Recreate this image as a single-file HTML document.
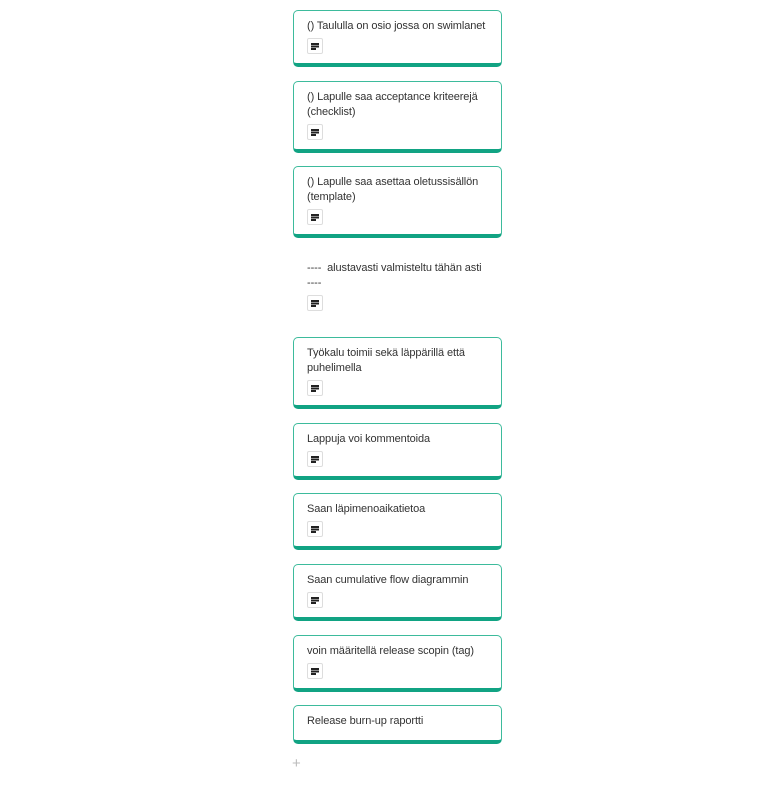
<!DOCTYPE html>
<html><head><meta charset="utf-8"><style>
body{margin:0;background:#fff;font-family:"Liberation Sans",sans-serif;}
.c{position:absolute;left:293px;width:209px;box-sizing:border-box;border:1.5px solid #3dbb9c;border-bottom:4px solid #11a383;border-radius:5px;background:#fff;padding:8px 4px 0 13px;font-size:11px;line-height:15px;color:#333;white-space:nowrap;letter-spacing:-0.1px;}
.n{border-color:transparent;}
.i{position:absolute;left:13px;width:16px;height:16px;border:1px solid #ddd;border-radius:2px;box-sizing:border-box;}
.i:before{content:"";position:absolute;left:3px;top:4px;width:8px;height:1.5px;background:#222;box-shadow:0 2.5px 0 #222,0 5px 0 #222;}
.i:after{content:"";position:absolute;left:8px;top:9px;width:3px;height:2px;background:#fff;}
</style></head><body>
<div class="c" style="top:10px;height:57px">() Taululla on osio jossa on swimlanet<div class="i" style="top:27px"></div></div>
<div class="c" style="top:81px;height:72px">() Lapulle saa acceptance kriteerejä<br>(checklist)<div class="i" style="top:42px"></div></div>
<div class="c" style="top:166px;height:72px">() Lapulle saa asettaa oletussisällön<br>(template)<div class="i" style="top:42px"></div></div>
<div class="c n" style="top:252px;height:72px">----&nbsp; alustavasti valmisteltu tähän asti<br>----<div class="i" style="top:42px"></div></div>
<div class="c" style="top:337px;height:72px">Työkalu toimii sekä läppärillä että<br>puhelimella<div class="i" style="top:42px"></div></div>
<div class="c" style="top:423px;height:57px">Lappuja voi kommentoida<div class="i" style="top:27px"></div></div>
<div class="c" style="top:493px;height:57px">Saan läpimenoaikatietoa<div class="i" style="top:27px"></div></div>
<div class="c" style="top:564px;height:57px">Saan cumulative flow diagrammin<div class="i" style="top:27px"></div></div>
<div class="c" style="top:635px;height:57px">voin määritellä release scopin (tag)<div class="i" style="top:27px"></div></div>
<div class="c" style="top:705px;height:39px">Release burn-up raportti</div>
<div style="position:absolute;left:292px;top:755px;font-size:15px;color:#bbb">+</div>
</body></html>
